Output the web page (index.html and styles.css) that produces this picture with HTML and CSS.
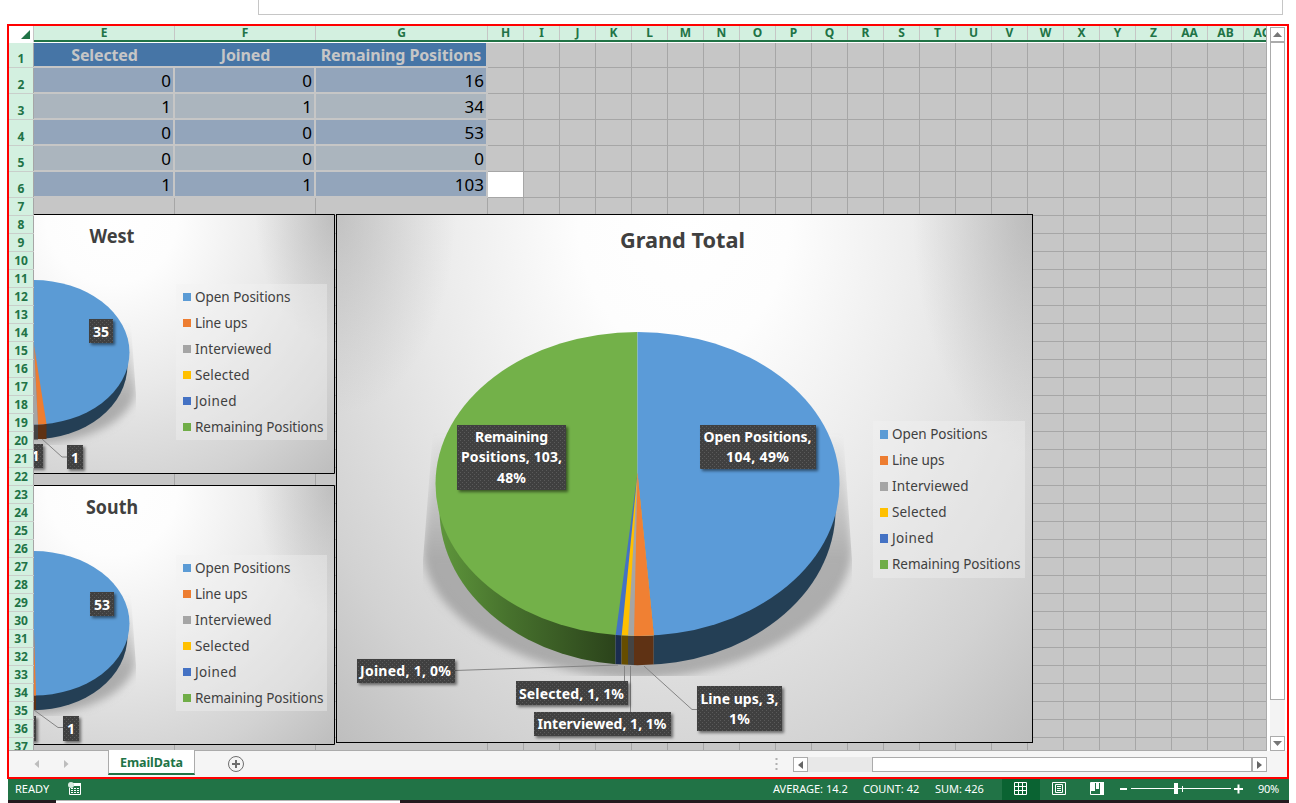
FILE: index.html
```html
<!DOCTYPE html>
<html lang="en">
<head>
<meta charset="utf-8">
<title>EmailData</title>
<link rel="stylesheet" href="styles.css">
</head>
<body>
<div class="formula-bar"></div>
<main class="window">
  <div class="work">
    <section class="sheet">
      <header class="col-heads">
        <div class="corner"><svg width="9" height="9"><path d="M9 0V9H0Z" fill="#217346"/></svg></div>
        <b class="c-e">E</b><b class="c-e">F</b><b class="c-g">G</b><b>H</b><b>I</b><b>J</b><b>K</b><b>L</b><b>M</b><b>N</b><b>O</b><b>P</b><b>Q</b><b>R</b><b>S</b><b>T</b><b>U</b><b>V</b><b>W</b><b>X</b><b>Y</b><b>Z</b><b>AA</b><b>AB</b><b>AC</b>
      </header>
      <div class="rows" id="rows">
        <div class="row first"><i>1</i><div class="cell th c-e">Selected</div><div class="cell th c-e">Joined</div><div class="cell th c-g">Remaining Positions</div></div>
        <div class="row tall odd"><i>2</i><div class="cell c-e">0</div><div class="cell c-e">0</div><div class="cell c-g">16</div></div>
        <div class="row tall"><i>3</i><div class="cell c-e">1</div><div class="cell c-e">1</div><div class="cell c-g">34</div></div>
        <div class="row tall odd"><i>4</i><div class="cell c-e">0</div><div class="cell c-e">0</div><div class="cell c-g">53</div></div>
        <div class="row tall"><i>5</i><div class="cell c-e">0</div><div class="cell c-e">0</div><div class="cell c-g">0</div></div>
        <div class="row tall odd"><i>6</i><div class="cell c-e">1</div><div class="cell c-e">1</div><div class="cell c-g">103</div><div class="active-cell"></div></div>
        <div class="row"><i>7</i></div><div class="row"><i>8</i></div><div class="row"><i>9</i></div><div class="row"><i>10</i></div><div class="row"><i>11</i></div><div class="row"><i>12</i></div><div class="row"><i>13</i></div><div class="row"><i>14</i></div><div class="row"><i>15</i></div><div class="row"><i>16</i></div><div class="row"><i>17</i></div><div class="row"><i>18</i></div><div class="row"><i>19</i></div><div class="row"><i>20</i></div><div class="row"><i>21</i></div><div class="row"><i>22</i></div><div class="row"><i>23</i></div><div class="row"><i>24</i></div><div class="row"><i>25</i></div><div class="row"><i>26</i></div><div class="row"><i>27</i></div><div class="row"><i>28</i></div><div class="row"><i>29</i></div><div class="row"><i>30</i></div><div class="row"><i>31</i></div><div class="row"><i>32</i></div><div class="row"><i>33</i></div><div class="row"><i>34</i></div><div class="row"><i>35</i></div><div class="row"><i>36</i></div><div class="row"><i>37</i></div>

        <svg class="chart west" width="301" height="260" viewBox="34 214 301 260">
          <defs>
            <radialGradient id="bgSmall" gradientUnits="userSpaceOnUse" cx="0" cy="0" r="1" gradientTransform="translate(112 214) scale(330 350)">
              <stop offset="0" stop-color="#fff"/><stop offset=".2" stop-color="#fdfdfd"/><stop offset=".5" stop-color="#e9e9e9"/><stop offset=".8" stop-color="#d2d2d2"/><stop offset="1" stop-color="#bdbdbd"/>
            </radialGradient>
            <radialGradient id="cornerSmall" gradientUnits="userSpaceOnUse" cx="0" cy="0" r="1" gradientTransform="translate(335 214) scale(80 130)">
              <stop offset="0" stop-color="#888" stop-opacity=".36"/><stop offset="1" stop-color="#888" stop-opacity="0"/>
            </radialGradient>
            <linearGradient id="shadeSmall" gradientUnits="userSpaceOnUse" x1="0" y1="325" x2="0" y2="400"><stop offset="0" stop-color="#8a8a8a" stop-opacity="0"/><stop offset="1" stop-color="#8a8a8a" stop-opacity=".62"/></linearGradient>
            <pattern id="dots" width="4" height="4" patternUnits="userSpaceOnUse"><rect width="4" height="4" fill="#404040"/><rect width="1" height="1" fill="#5a5a5a"/><rect x="2" y="2" width="1" height="1" fill="#5a5a5a"/></pattern>
            <filter id="drop" x="-20%" y="-20%" width="150%" height="160%"><feDropShadow dx="2" dy="2" stdDeviation="1.6" flood-color="#000" flood-opacity=".5"/></filter>
            <filter id="soft" x="-10%" y="-10%" width="120%" height="120%"><feGaussianBlur stdDeviation="4"/></filter>
            <clipPath id="smallShade"><path d="M0 270H127L136 395V445H0Z"/></clipPath>
            <g id="smallPie">
              <g clip-path="url(#smallShade)"><path d="M0 330H130L136 388C136 415 95 443 33 443H0Z" fill="url(#shadeSmall)" filter="url(#soft)"/></g>
            </g>
          </defs>
          <rect x="34" y="214" width="301" height="260" fill="url(#bgSmall)"/>
          <rect x="34" y="214" width="301" height="260" fill="url(#cornerSmall)"/>
          <use href="#smallPie"/>
          <ellipse cx="33.500" cy="365" rx="94" ry="74.200" fill="#243f55"/>
          <rect x="34" y="420" width="4" height="19.500" fill="#444"/><rect x="38" y="420" width="8.500" height="19" fill="#5f3214"/>
          <ellipse cx="33.500" cy="352.300" rx="96" ry="72.300" fill="#5b9bd5"/>
          <path d="M34 347L38 424.500H34Z" fill="#a5a5a5"/><path d="M34 345L46.500 424L38 424.500Z" fill="#ed7d31"/>
          <path d="M42 439L62 457H67" class="lead"/>
          <g filter="url(#drop)" fill="url(#dots)"><rect x="89" y="319" width="24" height="24"/><rect x="67" y="445" width="16" height="24"/><rect x="20" y="444" width="23" height="24"/></g>
          <g class="tag"><text x="101" y="337">35</text><text x="75" y="463">1</text><text x="35.500" y="461">1</text></g>
          <text class="title small" x="89.500" y="243" textLength="45" lengthAdjust="spacingAndGlyphs">West</text>
          <rect class="legend-bg" x="176" y="284" width="151" height="156"/>
          <g><rect x="183" y="293" width="8" height="8" fill="#5b9bd5"/><rect x="183" y="319" width="8" height="8" fill="#ed7d31"/><rect x="183" y="345" width="8" height="8" fill="#a5a5a5"/><rect x="183" y="371" width="8" height="8" fill="#ffc000"/><rect x="183" y="397" width="8" height="8" fill="#4472c4"/><rect x="183" y="423" width="8" height="8" fill="#70ad47"/></g>
          <g class="legend"><text x="195" y="302" textLength="95.500">Open Positions</text><text x="195" y="328" textLength="52.500">Line ups</text><text x="195" y="354" textLength="76.500">Interviewed</text><text x="195" y="380" textLength="54.500">Selected</text><text x="195" y="406" textLength="41.500">Joined</text><text x="195" y="432" textLength="128.500">Remaining Positions</text></g>
          <path d="M34 214.500H334.500V473.500H34" class="frame"/>
        </svg>

        <svg class="chart south" width="301" height="260" viewBox="34 214 301 260">
          <rect x="34" y="214" width="301" height="260" fill="url(#bgSmall)"/>
          <rect x="34" y="214" width="301" height="260" fill="url(#cornerSmall)"/>
          <use href="#smallPie"/>
          <ellipse cx="33.500" cy="365" rx="94" ry="74.200" fill="#243f55"/>
          <rect x="34" y="420" width="2" height="19" fill="#5f3214"/>
          <ellipse cx="33.500" cy="352.300" rx="96" ry="72.300" fill="#5b9bd5"/>
          <path d="M34 360L36 424.500H34Z" fill="#ed7d31"/>
          <path d="M34 439L58 456.500H63" class="lead"/>
          <g filter="url(#drop)" fill="url(#dots)"><rect x="90" y="321" width="24" height="24"/><rect x="63" y="445" width="16" height="25"/><rect x="14" y="445" width="22" height="25"/></g>
          <g class="tag"><text x="102" y="339">53</text><text x="71" y="463">1</text></g>
          <text class="title small" x="86" y="243" textLength="52" lengthAdjust="spacingAndGlyphs">South</text>
          <rect class="legend-bg" x="176" y="284" width="151" height="156"/>
          <g><rect x="183" y="293" width="8" height="8" fill="#5b9bd5"/><rect x="183" y="319" width="8" height="8" fill="#ed7d31"/><rect x="183" y="345" width="8" height="8" fill="#a5a5a5"/><rect x="183" y="371" width="8" height="8" fill="#ffc000"/><rect x="183" y="397" width="8" height="8" fill="#4472c4"/><rect x="183" y="423" width="8" height="8" fill="#70ad47"/></g>
          <g class="legend"><text x="195" y="302" textLength="95.500">Open Positions</text><text x="195" y="328" textLength="52.500">Line ups</text><text x="195" y="354" textLength="76.500">Interviewed</text><text x="195" y="380" textLength="54.500">Selected</text><text x="195" y="406" textLength="41.500">Joined</text><text x="195" y="432" textLength="128.500">Remaining Positions</text></g>
          <path d="M34 214.500H334.500V473.500H34" class="frame"/>
        </svg>

        <svg class="chart grand" width="697" height="529" viewBox="336 214 697 529">
          <defs>
            <radialGradient id="bgBig" gradientUnits="userSpaceOnUse" cx="0" cy="0" r="1" gradientTransform="translate(684 214) scale(530 710)">
              <stop offset="0" stop-color="#fff"/><stop offset=".2" stop-color="#fdfdfd"/><stop offset=".5" stop-color="#e9e9e9"/><stop offset=".8" stop-color="#d2d2d2"/><stop offset="1" stop-color="#bdbdbd"/>
            </radialGradient>
            <radialGradient id="cornerL" gradientUnits="userSpaceOnUse" cx="0" cy="0" r="1" gradientTransform="translate(336 214) scale(120 200)">
              <stop offset="0" stop-color="#888" stop-opacity=".32"/><stop offset="1" stop-color="#888" stop-opacity="0"/>
            </radialGradient>
            <radialGradient id="cornerR" gradientUnits="userSpaceOnUse" cx="0" cy="0" r="1" gradientTransform="translate(1033 214) scale(120 240)">
              <stop offset="0" stop-color="#888" stop-opacity=".4"/><stop offset="1" stop-color="#888" stop-opacity="0"/>
            </radialGradient>
            <linearGradient id="shadeBig" gradientUnits="userSpaceOnUse" x1="0" y1="430" x2="0" y2="560"><stop offset="0" stop-color="#8c8c8c" stop-opacity="0"/><stop offset="1" stop-color="#8c8c8c" stop-opacity=".62"/></linearGradient>
            <linearGradient id="greenSide" gradientUnits="userSpaceOnUse" x1="437" y1="0" x2="616" y2="0"><stop offset="0" stop-color="#5f973c"/><stop offset=".4" stop-color="#47722d"/><stop offset="1" stop-color="#2b431b"/></linearGradient>
            <clipPath id="bigShade"><path d="M433 430H843L852 560V676H423V560Z"/></clipPath>
            <clipPath id="topFace"><ellipse cx="637.500" cy="484" rx="202" ry="152"/></clipPath>
            <clipPath id="sideFace"><ellipse cx="637.500" cy="510" rx="198" ry="155.300"/></clipPath>
          </defs>
          <rect x="336" y="214" width="697" height="529" fill="url(#bgBig)"/>
          <rect x="336" y="214" width="697" height="529" fill="url(#cornerL)"/>
          <rect x="336" y="214" width="697" height="529" fill="url(#cornerR)"/>
          <g clip-path="url(#bigShade)"><path d="M433 440L423 550C424 618 530 678 638 678S850 618 852 550L843 440Z" fill="url(#shadeBig)" filter="url(#soft)"/></g>
          <g clip-path="url(#sideFace)"><rect x="430" y="480" width="185.500" height="190" fill="url(#greenSide)"/><rect x="615.500" y="600" width="6" height="70" fill="#1b2d50"/><rect x="621.500" y="600" width="6.500" height="70" fill="#664d00"/><rect x="628" y="600" width="6" height="70" fill="#444"/><rect x="634" y="600" width="19.700" height="70" fill="#5f3214"/><rect x="653.700" y="480" width="190" height="190" fill="#243f55"/></g>
          <g clip-path="url(#topFace)"><rect x="430" y="330" width="207.500" height="310" fill="#73b149"/><rect x="637.500" y="330" width="210" height="310" fill="#5b9bd8"/><path d="M637.500 473L615.500 636H654V636Z" fill="#4472c4"/><path d="M637.500 473L621.500 637H654Z" fill="#ffc000"/><path d="M637.500 473L628 637H654Z" fill="#a5a5a5"/><path d="M637.500 473L634 637H654Z" fill="#f08033"/></g>
          <g class="lead"><path d="M455 670.500L618 665"/><path d="M624.500 666V681"/><path d="M630.500 666V712"/><path d="M644 666L692 709.500H697"/></g>
          <g filter="url(#drop)" fill="url(#dots)"><rect x="457" y="425" width="109" height="65"/><rect x="700" y="425" width="116" height="44"/><rect x="357" y="659" width="98" height="24"/><rect x="516" y="681" width="112" height="24"/><rect x="534" y="712" width="137" height="24"/><rect x="697" y="686" width="85" height="45"/></g>
          <g class="tag">
            <text x="511.500" y="442" textLength="73">Remaining</text><text x="511.500" y="462" textLength="101">Positions, 103,</text><text x="511.500" y="483" textLength="29">48%</text>
            <text x="757.500" y="442" textLength="108">Open Positions,</text><text x="757.500" y="462" textLength="63">104, 49%</text>
            <text x="405.500" y="676" textLength="91">Joined, 1, 0%</text><text x="571.500" y="699" textLength="105">Selected, 1, 1%</text><text x="602" y="729" textLength="129">Interviewed, 1, 1%</text>
            <text x="739.500" y="704" textLength="78">Line ups, 3,</text><text x="739.500" y="724" textLength="21">1%</text>
          </g>
          <text class="title" x="620" y="248" textLength="125" lengthAdjust="spacingAndGlyphs">Grand Total</text>
          <rect class="legend-bg" x="873" y="421" width="152" height="157"/>
          <g><rect x="880" y="430" width="8" height="9" fill="#5b9bd5"/><rect x="880" y="456" width="8" height="9" fill="#ed7d31"/><rect x="880" y="482" width="8" height="9" fill="#a5a5a5"/><rect x="880" y="508" width="8" height="9" fill="#ffc000"/><rect x="880" y="534" width="8" height="9" fill="#4472c4"/><rect x="880" y="560" width="8" height="9" fill="#70ad47"/></g>
          <g class="legend"><text x="892" y="439" textLength="95.500">Open Positions</text><text x="892" y="465" textLength="52.500">Line ups</text><text x="892" y="491" textLength="76.500">Interviewed</text><text x="892" y="517" textLength="54.500">Selected</text><text x="892" y="543" textLength="41.500">Joined</text><text x="892" y="569" textLength="128.500">Remaining Positions</text></g>
          <rect x="336.500" y="214.500" width="696" height="528" class="frame"/>
        </svg>
      </div>
    </section>
    <aside class="vscroll">
      <div class="btn"><svg width="9" height="5"><path d="M4.500 0L9 5H0Z" fill="#777"/></svg></div>
      <div class="vthumb"></div><div class="vtrack"></div>
      <div class="btn"><svg width="9" height="5"><path d="M0 0H9L4.500 5Z" fill="#777"/></svg></div>
    </aside>
  </div>
  <nav class="tabs">
    <svg class="arrows" width="99" height="26"><path d="M30 9V17L25.500 13ZM55 9V17L59.500 13Z" fill="#bdbdbd"/></svg>
    <div class="tab">EmailData</div>
    <svg class="add" width="18" height="18"><circle cx="9" cy="9" r="7.500" fill="none" stroke="#6e6e6e"/><path d="M5 9H13M9 5V13" stroke="#6e6e6e" stroke-width="2"/></svg>
    <svg class="grip" width="3" height="14"><path d="M1.500 1V3M1.500 6V8M1.500 11V13" stroke="#b0b0b0" stroke-width="2"/></svg>
    <div class="hbtn"><svg width="5" height="8"><path d="M5 0V8L0 4Z" fill="#666"/></svg></div>
    <div class="htrack"></div><div class="hthumb"></div>
    <div class="hbtn last"><svg width="5" height="8"><path d="M0 0V8L5 4Z" fill="#666"/></svg></div>
  </nav>
</main>
<footer class="status">
  <span class="ready">READY</span>
  <svg class="macro" width="14" height="13"><path d="M5 1.500H12.500V12.500H1.500V6" fill="none" stroke="#fff"/><path d="M6 1H13V4H6Z" fill="#fff"/><path d="M3 6.500H5M6 6.500H8M9 6.500H11M3 8.500H5M6 8.500H8M9 8.500H11M3 10.500H5M6 10.500H8M9 10.500H11" stroke="#fff"/><circle cx="3" cy="3" r="3" fill="#d7eadf"/></svg>
  <span class="avg">AVERAGE: 14.2</span><span class="count">COUNT: 42</span><span class="sum">SUM: 426</span>
  <div class="views">
    <div class="view on"><svg width="13" height="13"><path d="M.5 .5H12.500V12.500H.5ZM4.500 0V13M8.500 0V13M0 4.500H13M0 8.500H13" fill="none" stroke="#fff"/></svg></div>
    <div class="view"><svg width="14" height="13"><path d="M.5 .5H13.500V12.500H.5ZM3.500 2.500H10.500V10.500H3.500ZM5 4.500H9M5 6.500H9M5 8.500H9" fill="none" stroke="#fff"/></svg></div>
    <div class="view"><svg width="14" height="13"><path d="M.5 .5H13.500V12.500H.5Z" fill="none" stroke="#fff"/><path d="M1 1H5V9H1ZM6 1H9V7H6ZM10 0H14V13H10Z" fill="#fff"/></svg></div>
  </div>
  <svg class="zoom" width="126" height="13"><path d="M0 7H7M114 7H123M118.500 2.500V11.500" stroke="#fff" stroke-width="2"/><path d="M11 6.500H111M62.500 4V10" stroke="#fff"/><rect x="54" y="1" width="4" height="11" fill="#fff"/></svg>
  <span class="pct">90%</span>
</footer>
<div class="desktop"><span></span></div>
</body>
</html>
```
FILE: styles.css
```css
* { box-sizing: border-box; }
body { margin: 0; width: 1296px; height: 803px; overflow: hidden; background: #fff; font-family: "Noto Sans", "Open Sans", sans-serif; }
svg { display: block; }
.formula-bar { width: 1025px; height: 15px; margin: 0 0 9px 258px; border: 1px solid #c6c6c6; border-top: 0; }
.window { width: 1282px; height: 755px; margin-left: 7px; border: 2px solid #f00; display: flex; flex-direction: column; }
.work { display: flex; height: 725px; }
.sheet { width: 1258px; overflow: hidden; border-bottom: 1px solid #ababab; border-right: 1px solid #ababab; }
.col-heads { display: flex; width: 1400px; height: 16px; background: #d3f0e0; border-bottom: 2px solid #217346; }
.col-heads b { flex: none; width: 36px; height: 14px; border-right: 1px solid #c6c6c6; color: #217346; font-size: 12px; line-height: 14px; text-align: center; }
.col-heads .c-e { width: 141px; }
.col-heads .c-g { width: 172px; }
.corner { flex: none; width: 25px; height: 16px; padding: 4px 0 0 12px; background: #fff; border-right: 1px solid #c6c6c6; }
.rows { position: relative; width: 1400px; border-top: 1px solid #fff;
  background: linear-gradient(#a6a6a6, #a6a6a6) 165px 0 / 1px 100% no-repeat, linear-gradient(#a6a6a6, #a6a6a6) 306px 0 / 1px 100% no-repeat, repeating-linear-gradient(90deg, #a6a6a6 0 1px, transparent 1px 36px) 478px 0 / 922px 100% no-repeat, #c6c6c6; }
.row { display: flex; height: 18px; border-bottom: 1px solid #a6a6a6; }
.row.first { height: 25px; }
.row.tall { height: 26px; }
.row i { flex: none; display: flex; align-items: flex-end; justify-content: center; width: 25px; height: 100%; box-shadow: 0 1px #c9cfcb; border-right: 1px solid #a6a6a6; background: #d3f0e0; color: #217346; font: bold 12px/17px "Noto Sans", sans-serif; }
.cell { flex: none; height: calc(100% + 1px); border: solid #c6c6c6; border-width: 0 2px 2px 0; padding-right: 2px; background: #abb5be; color: #000; font-size: 17px; line-height: 25px; text-align: right; }
.c-e { width: 141px; }
.c-g { width: 172px; }
.odd .cell { background: #93a5bb; }
.row .th { padding: 0; background: #4675a6; color: #c6c6c6; font-weight: bold; font-size: 16px; letter-spacing: -.12px; line-height: 24px; text-align: center; }
.row .th.c-e { border-right-width: 0; }
.active-cell { width: 35px; background: #fff; }
.chart { position: absolute; overflow: hidden; }
.west { left: 25px; top: 171px; }
.south { left: 25px; top: 442px; }
.grand { left: 327px; top: 171px; }
.frame { fill: none; stroke: #000; }
.lead { fill: none; stroke: #848484; }
.title { font: bold 22px "Noto Sans", sans-serif; fill: #404040; }
.title.small { font-size: 19px; }
.tag { font: bold 14px "Noto Sans", sans-serif; fill: #fff; text-anchor: middle; }
.legend { font: 13.500px "Noto Sans", sans-serif; fill: #404040; }
.legend-bg { fill: #f2f2f2; fill-opacity: .39; }
.vscroll { display: flex; flex-direction: column; width: 15px; margin: 1px 0 0 3px; }
.btn { flex: none; display: flex; align-items: center; justify-content: center; height: 15px; border: 1px solid #ababab; background: #fff; }
.vthumb { height: 658px; border: 1px solid #ababab; background: #fff; }
.vtrack { flex: 1; background: #f3f3f3; }
.tabs { display: flex; height: 26px; background: #f5f5f5; }
.tab { width: 87px; height: 25px; margin-top: -1px; border: 1px solid #ababab; border-width: 0 1px 2px; border-bottom-color: #217346; background: #fff; color: #217346; font-weight: bold; font-size: 12.500px; line-height: 26px; text-align: center; letter-spacing: -.1px; }
.add { margin: 4px 0 0 32px; }
.grip { margin: 6px 0 0 530px; }
.hbtn { display: flex; align-items: center; justify-content: center; width: 15px; height: 15px; margin: 6px 0 0 15px; border: 1px solid #ababab; background: #fff; }
.hbtn.last { margin-left: 0; }
.htrack { width: 64px; height: 15px; margin-top: 6px; background: #e8e8e8; }
.hthumb { width: 380px; height: 15px; margin-top: 6px; border: 1px solid #ababab; background: #fff; }
.status { display: flex; align-items: flex-start; width: 1281px; height: 21px; margin-left: 8px; background: #217346; color: #fff; font: 11px/20px "Noto Sans", sans-serif; white-space: nowrap; }
.ready { width: 53px; padding-left: 7px; }
.macro { margin: 3px 0 0 7px; }
.avg { width: 90px; margin-left: 691px; }
.count { width: 72px; }
.sum { width: 67px; }
.views { display: flex; height: 21px; }
.view { display: flex; align-items: flex-start; justify-content: flex-start; width: 38px; padding: 3px 0 0 12px; }
.on { background: #0a6332; }
.zoom { margin: 3px 0 0 4px; }
.pct { margin-left: 12px; letter-spacing: -.3px; }
.desktop { width: 1281px; height: 3px; margin-left: 8px; padding-left: 48px; background: #231a1e; }
.desktop span { display: block; width: 344px; height: 3px; border-top: 1px solid #b5b5b5; background: #fff; }
```
